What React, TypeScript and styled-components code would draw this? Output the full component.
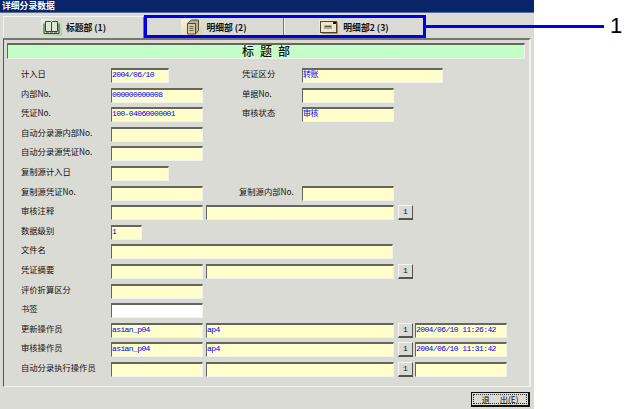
import React from "react";
import styled, { createGlobalStyle } from "styled-components";

const GlobalStyle = createGlobalStyle`
    html, body {
        margin: 0;
        padding: 0;
        background: #ffffff;
    }
`;

const CJK = `"Noto Sans CJK SC", "Liberation Sans", sans-serif`;
const MONO = `"Liberation Mono", "Noto Sans CJK SC", monospace`;

type FieldProps = { value?: string; col: string; w: number; white?: boolean };

const BookIcon = () => (
    <svg width="21" height="17" viewBox="0 0 21 17">
        <defs>
            <linearGradient id="bookBg" x1="0" y1="0" x2="1" y2="1">
                <stop offset="0" stopColor="#e4f4dc" />
                <stop offset="1" stopColor="#a8d2a2" />
            </linearGradient>
        </defs>
        <rect width="21" height="17" fill="url(#bookBg)" />
        <path d="M4.5 2.5h5l1 1 1-1h5v10h-12z" fill="#dfe8d8" stroke="#3c443a" />
        <path d="M10.5 3.5v9" stroke="#3c443a" />
        <path d="M3 4.5v10h15v-10" fill="none" stroke="#3c443a" />
        <path d="M5 13.5h3M9 13.5h3M13 13.5h3" stroke="#8a9486" />
    </svg>
);

const StackIcon = () => (
    <svg width="21" height="17" viewBox="0 0 21 17">
        <defs>
            <linearGradient id="stackBg" x1="0" y1="0" x2="1" y2="1">
                <stop offset="0" stopColor="#f8f3dc" />
                <stop offset="1" stopColor="#d8cfa8" />
            </linearGradient>
        </defs>
        <rect width="21" height="17" fill="url(#stackBg)" />
        <path d="M7.5 3.5l3-2.5h7v10.5l-3 3.5z" fill="#b4b08e" stroke="#4e4c38" />
        <path d="M6.5 4.5h8v10.5h-8z" fill="#cfcaa8" stroke="#4e4c38" />
        <path d="M8.5 7.5h4M8.5 9.5h4M8.5 11.5h4" stroke="#6e6b50" />
    </svg>
);

const EnvelopeIcon = () => (
    <svg width="20" height="15" viewBox="0 0 20 15">
        <defs>
            <linearGradient id="envBg" x1="0" y1="0" x2="1" y2="1">
                <stop offset="0" stopColor="#f8f0d8" />
                <stop offset="1" stopColor="#dccfa8" />
            </linearGradient>
        </defs>
        <rect width="20" height="15" fill="url(#envBg)" />
        <rect x="1.5" y="1.5" width="16" height="11" fill="#efe6cc" stroke="#4a473a" />
        <rect x="5" y="5" width="8" height="4" fill="#b0ab98" />
        <path d="M6 6.5h6" stroke="#5b5845" />
        <rect x="14" y="2" width="3" height="2" fill="#111" />
        <path d="M18.5 2v11.5H3" stroke="#9c9678" fill="none" />
    </svg>
);

const Field: React.FC<FieldProps> = ({ value, col, w, white }) => (
    <FieldBox $col={col} $w={w} $white={white}>
        {value}
    </FieldBox>
);

const MoreButton: React.FC = () => <SmallButton>1</SmallButton>;

const App: React.FC = () => {
    return (
        <Page>
            <GlobalStyle />
            <Window>
                <TitleBar>详细分录数据</TitleBar>
                <TabBar>
                    <Tab $w={141}>
                        <BookIcon />
                        <TabLabel>标题部 (1)</TabLabel>
                    </Tab>
                    <Tab $w={140}>
                        <StackIcon />
                        <TabLabel>明细部 (2)</TabLabel>
                    </Tab>
                    <Tab $w={140}>
                        <EnvelopeIcon />
                        <TabLabel>明细部2 (3)</TabLabel>
                    </Tab>
                </TabBar>
                <Panel>
                    <Banner>标题部</Banner>
                    <Form>
                        <Row>
                            <Label>计入日</Label>
                            <Field col="2" w={58} value="2004/06/10" />
                            <MidLabel>凭证区分</MidLabel>
                            <Field col="5 / span 3" w={141} value="转账" />
                        </Row>
                        <Row>
                            <Label>内部No.</Label>
                            <Field col="2" w={92} value="000000000008" />
                            <MidLabel>单据No.</MidLabel>
                            <Field col="5" w={92} />
                        </Row>
                        <Row>
                            <Label>凭证No.</Label>
                            <Field col="2" w={92} value="100-04060000001" />
                            <MidLabel>审核状态</MidLabel>
                            <Field col="5" w={92} value="审核" />
                        </Row>
                        <Row>
                            <Label>自动分录源内部No.</Label>
                            <Field col="2" w={92} />
                        </Row>
                        <Row>
                            <Label>自动分录源凭证No.</Label>
                            <Field col="2" w={92} />
                        </Row>
                        <Row>
                            <Label>复制源计入日</Label>
                            <Field col="2" w={58} />
                        </Row>
                        <Row>
                            <Label>复制源凭证No.</Label>
                            <Field col="2" w={92} />
                            <MidLabel $shift>复制源内部No.</MidLabel>
                            <Field col="5" w={92} />
                        </Row>
                        <Row>
                            <Label>审核注释</Label>
                            <Field col="2" w={92} />
                            <Field col="3 / span 3" w={188} />
                            <MoreButton />
                        </Row>
                        <Row>
                            <Label>数据级别</Label>
                            <Field col="2" w={31} value="1" />
                        </Row>
                        <Row>
                            <Label>文件名</Label>
                            <Field col="2 / span 4" w={282} />
                        </Row>
                        <Row>
                            <Label>凭证摘要</Label>
                            <Field col="2" w={92} />
                            <Field col="3 / span 3" w={188} />
                            <MoreButton />
                        </Row>
                        <Row>
                            <Label>评价折算区分</Label>
                            <Field col="2" w={92} />
                        </Row>
                        <Row>
                            <Label>书签</Label>
                            <Field col="2" w={92} white />
                        </Row>
                        <Row>
                            <Label>更新操作员</Label>
                            <Field col="2" w={92} value="asian_p04" />
                            <Field col="3 / span 3" w={188} value="ap4" />
                            <MoreButton />
                            <Field col="7" w={92} value="2004/06/10 11:26:42" />
                        </Row>
                        <Row>
                            <Label>审核操作员</Label>
                            <Field col="2" w={92} value="asian_p04" />
                            <Field col="3 / span 3" w={188} value="ap4" />
                            <MoreButton />
                            <Field col="7" w={92} value="2004/06/10 11:31:42" />
                        </Row>
                        <Row>
                            <Label>自动分录执行操作员</Label>
                            <Field col="2" w={92} />
                            <Field col="3 / span 3" w={188} />
                            <MoreButton />
                            <Field col="7" w={92} />
                        </Row>
                    </Form>
                </Panel>
                <Footer>
                    <ExitButton>
                        <ExitInner>
                            <span>退</span>
                            <span>出(E)</span>
                        </ExitInner>
                    </ExitButton>
                </Footer>
            </Window>
            <Callout />
            <CalloutLine />
            <CalloutNumber>1</CalloutNumber>
        </Page>
    );
};

export default App;

const Page = styled.div`
    position: relative;
    width: 624px;
    height: 409px;
    overflow: hidden;
    background: #ffffff;
`;

const Window = styled.div`
    display: flex;
    flex-direction: column;
    width: 534px;
    height: 409px;
    background: #dbdbd5;
    font-family: ${CJK};
    color: #111111;
`;

const TitleBar = styled.div`
    height: 12px;
    padding-left: 2px;
    background: #0a246a;
    border-bottom: 1px solid #5a6c96;
    color: #ffffff;
    font-size: 8.8px;
    font-weight: 700;
    line-height: 12px;
`;

const TabBar = styled.div`
    display: flex;
    height: 22px;
    margin-top: 3px;
    padding-left: 3px;
`;

const Tab = styled.div<{ $w: number }>`
    box-sizing: border-box;
    display: flex;
    align-items: center;
    justify-content: center;
    gap: 4px;
    width: ${(p) => p.$w}px;
    border-top: 1px solid #f4f4f0;
    border-left: 1px solid #f4f4f0;
    border-right: 1px solid #77776f;
`;

const TabLabel = styled.span`
    font-size: 8.8px;
    font-weight: 700;
    white-space: nowrap;
`;

const Panel = styled.div`
    box-sizing: border-box;
    height: 349px;
    margin: 0 3px;
    padding: 3px 4px 0 3px;
    border-top: 2px solid #77776f;
    border-left: 1px solid #55554f;
    border-right: 2px solid #f0f0ec;
    border-bottom: 1px solid #f0f0ec;
`;

const Banner = styled.div`
    box-sizing: border-box;
    height: 16px;
    padding-left: 6px;
    background: #c4ffc8;
    border-top: 2px solid #66665f;
    border-left: 1px solid #66665f;
    border-right: 1px solid #f0f0ec;
    border-bottom: 1px solid #f0f0ec;
    text-align: center;
    font-size: 12px;
    font-weight: 500;
    letter-spacing: 6px;
    line-height: 11px;
`;

const Form = styled.div`
    display: grid;
    grid-auto-rows: 19.6px;
    margin-top: 9px;
    padding-left: 14px;
`;

/* label | first field | second field start | mid label | right field | button | time */
const Row = styled.div`
    display: grid;
    grid-template-columns: 90px 95px 36px 60px 96px 17px 92px;
    align-items: start;
`;

const Label = styled.span`
    grid-column: 1;
    font-size: 8.3px;
    line-height: 11px;
    white-space: nowrap;
`;

const MidLabel = styled.span<{ $shift?: boolean }>`
    grid-column: 4;
    margin-left: ${(p) => (p.$shift ? "-3px" : "0")};
    font-size: 8.3px;
    line-height: 11px;
    white-space: nowrap;
`;

const FieldBox = styled.div<{ $col: string; $w: number; $white?: boolean }>`
    box-sizing: border-box;
    grid-column: ${(p) => p.$col};
    grid-row: 1;
    width: ${(p) => p.$w}px;
    height: 15px;
    overflow: hidden;
    background: ${(p) => (p.$white ? "#ffffff" : "#ffffcc")};
    border-top: 2px solid #66665f;
    border-left: 1px solid #66665f;
    border-right: 1px solid #f2f2ee;
    border-bottom: 1px solid #f2f2ee;
    color: #0000ff;
    font-family: ${MONO};
    font-size: 8px;
    letter-spacing: -0.6px;
    line-height: 9px;
    white-space: nowrap;
`;

const SmallButton = styled.div`
    box-sizing: border-box;
    grid-column: 6;
    grid-row: 1;
    width: 15px;
    height: 15px;
    background: #dbdbd5;
    border-top: 1px solid #f6f6f2;
    border-left: 1px solid #f6f6f2;
    border-right: 1px solid #55554f;
    border-bottom: 2px solid #55554f;
    text-align: center;
    font-family: "Liberation Mono", monospace;
    font-size: 8px;
    line-height: 11px;
`;

const Footer = styled.div`
    display: flex;
    justify-content: flex-end;
    padding: 5px 4px 0 0;
`;

const ExitButton = styled.div`
    box-sizing: border-box;
    width: 59px;
    height: 15px;
    padding: 1px;
    background: #dbdbd5;
    border: 1px solid #111111;
    border-right-width: 2px;
    border-bottom-width: 2px;
`;

const ExitInner = styled.div`
    box-sizing: border-box;
    display: flex;
    align-items: center;
    justify-content: center;
    gap: 10px;
    height: 100%;
    border: 1px dotted #333333;
    font-size: 8.3px;
    line-height: 9px;
    white-space: nowrap;
`;

const Callout = styled.div`
    position: absolute;
    left: 144px;
    top: 15px;
    box-sizing: border-box;
    width: 282px;
    height: 23px;
    border: 3px solid #0000e6;
`;

const CalloutLine = styled.div`
    position: absolute;
    left: 426px;
    top: 25px;
    width: 178px;
    height: 3px;
    background: #0000e6;
`;

const CalloutNumber = styled.div`
    position: absolute;
    left: 610px;
    top: 13px;
    font-family: "Liberation Sans", sans-serif;
    font-size: 22px;
    line-height: 25px;
    color: #000000;
`;
